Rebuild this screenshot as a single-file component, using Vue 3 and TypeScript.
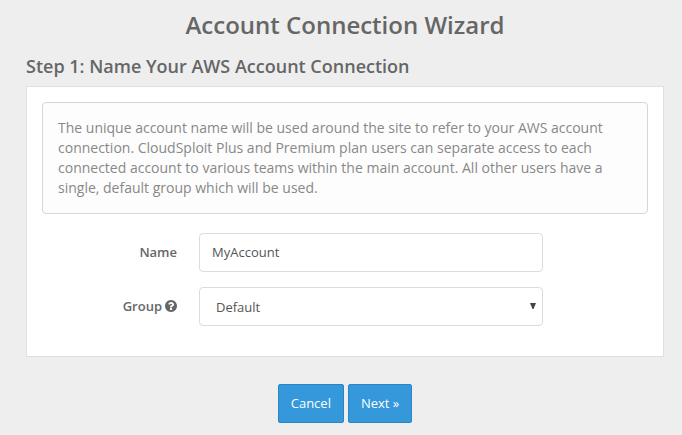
<script setup lang="ts">
import { ref } from 'vue'

const accountName = ref<string>('MyAccount')
const groups: string[] = ['Default']
const group = ref<string>(groups[0])
</script>

<template>
  <main class="wizard">
    <h1 class="title">Account Connection Wizard</h1>
    <h2 class="step">Step 1: Name Your AWS Account Connection</h2>
    <form id="connection" class="panel" @submit.prevent>
      <p class="well">
        The unique account name will be used around the site to refer to your AWS account
        connection. CloudSploit Plus and Premium plan users can separate access to each connected
        account to various teams within the main account. All other users have a single, default
        group which will be used.
      </p>
      <div class="row">
        <label class="label" for="name">Name</label>
        <input id="name" v-model="accountName" class="control" type="text" />
      </div>
      <div class="row">
        <label class="label" for="group">
          Group
          <svg class="help" viewBox="0 0 1536 1536" aria-hidden="true">
            <path
              fill="currentColor"
              d="M896 1248v-192q0-14-9-23t-23-9h-192q-14 0-23 9t-9 23v192q0 14 9 23t23 9h192q14 0 23-9t9-23zm256-672q0-88-55.500-163t-138.500-116-170-41q-243 0-371 213-15 24 8 42l132 100q7 6 19 6 16 0 25-12 53-68 86-92 34-24 86-24 48 0 85.500 26t37.500 59q0 38-20 61t-68 45q-63 28-115.500 86.500t-52.500 125.500v36q0 14 9 23t23 9h192q14 0 23-9t9-23q0-19 21.500-49.500t54.500-49.500q32-18 49-28.500t46-35 44.500-48 28-60.500 12.500-81zm384 192q0 209-103 385.500t-279.500 279.500-385.500 103-385.500-103-279.500-279.500-103-385.500 103-385.500 279.500-279.500 385.500-103 385.500 103 279.500 279.500 103 385.500z"
            />
          </svg>
        </label>
        <div class="picker">
          <select id="group" v-model="group" class="control select">
            <option v-for="g in groups" :key="g" :value="g">{{ g }}</option>
          </select>
          <svg class="arrow" viewBox="0 0 6 6" aria-hidden="true">
            <path d="M0 0h6L3.500 6h-1z" fill="#444" />
          </svg>
        </div>
      </div>
    </form>
    <div class="actions">
      <button class="button" type="button">Cancel</button>
      <button class="button" type="submit" form="connection">Next »</button>
    </div>
  </main>
</template>

<style>
body {
  background: #eee;
}
</style>

<style scoped>
.wizard {
  padding: 8px 18px 12px 26px;
  color: #666;
  font-family: 'Open Sans', 'Liberation Sans', sans-serif;
  font-size: 13px;
  line-height: 20px;
}
.title {
  margin: 0;
  font-size: 24px;
  font-weight: 600;
  line-height: 34px;
  text-align: center;
}
.step {
  margin: 12px 0 8px;
  font-size: 18px;
  font-weight: 600;
  line-height: 24px;
}
.panel {
  display: flex;
  flex-direction: column;
  gap: 15px;
  padding: 15px 15px 30px;
  border: 1px solid #e0e0e0;
  background: #fff;
}
.well {
  margin: 0 0 4px;
  padding: 15px;
  border: 1px solid #d6d6d6;
  border-radius: 4px;
  background: #fdfdfd;
  color: #888;
  font-size: 14px;
}
.row {
  display: grid;
  grid-template-columns: 157fr 344fr 105fr;
  align-items: center;
}
.label {
  display: flex;
  align-items: center;
  justify-content: flex-end;
  gap: 3px;
  padding: 0 22px 2px 0;
  font-weight: 600;
}
.help {
  width: 12px;
  height: 12px;
}
.control {
  box-sizing: border-box;
  display: block;
  width: 100%;
  height: 39px;
  margin: 0;
  padding: 8px 12px 10px;
  border: 1px solid #dcdcdc;
  border-radius: 4px;
  background: #fff;
  color: #555;
  font: inherit;
}
.picker {
  position: relative;
}
.select {
  padding: 8px 16px;
  appearance: none;
}
.arrow {
  position: absolute;
  top: 16px;
  right: 7px;
  width: 6px;
  height: 6px;
  pointer-events: none;
}
.actions {
  display: flex;
  justify-content: center;
  gap: 4px;
  margin-top: 27px;
}
.button {
  height: 39px;
  padding: 0 12px 2px;
  border: 1px solid #2a85c4;
  border-radius: 2px;
  background: #3498db;
  color: #fff;
  font: inherit;
}
</style>
